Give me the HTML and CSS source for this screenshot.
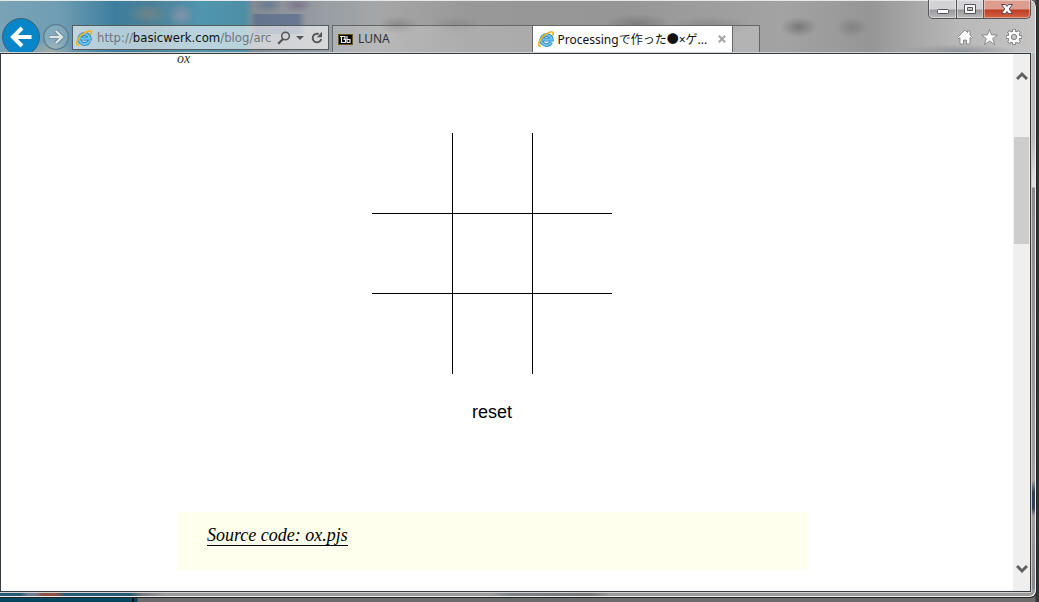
FILE: index.html
```html
<!DOCTYPE html>
<html lang="ja">
<head>
<meta charset="utf-8">
<title>Processingで作った●×ゲーム</title>
<link rel="stylesheet" href="styles.css">
</head>
<body>
<svg class="defs" aria-hidden="true">
  <symbol id="ie" viewBox="0 0 16 16">
    <path d="M13.200 11.200A5.200 5 0 1 1 13.700 8.700H5" fill="none" stroke="#2384bf" stroke-width="3.800"/>
    <path d="M13.200 11.200A5.200 5 0 1 1 13.700 8.700H5" fill="none" stroke="#6cc3ee" stroke-width="2.200"/>
    <path d="M3 15.200C-.8 15.800.2 10 5 5.400 9.400 1.200 14.800-.4 15.200 2.200c.1.800-.2 1.700-.6 2.500" fill="none" stroke="#f3b51b" stroke-width="1.700"/>
  </symbol>
</svg>
<div class="window">
  <header class="chrome">
    <div class="caption">
      <button class="cap" aria-label="Minimize"><svg width="14" height="12" viewBox="0 0 14 12"><rect x="1.500" y="6.500" width="11" height="4" rx="1" fill="#fff" stroke="#50505f"/></svg></button>
      <button class="cap" aria-label="Maximize"><svg width="14" height="12" viewBox="0 0 14 12"><path d="M1.500 1.500h11v9h-11zM4.500 4.500v3h5v-3z" fill="#fff" fill-rule="evenodd" stroke="#50505f"/></svg></button>
      <button class="cap close" aria-label="Close"><svg width="14" height="12" viewBox="0 0 14 12"><path d="M1.500 1.500h4L7 3.500l1.500-2h4L9.200 6l3.300 4.500h-4L7 8.500l-1.500 2h-4L4.800 6z" fill="#fff" stroke="#5a4858"/></svg></button>
    </div>
    <div class="toolbar">
      <button class="back" aria-label="Back"><svg width="38" height="38" viewBox="0 0 38 38"><circle cx="19" cy="19" r="18.500" fill="#0686c9" stroke="#41606e"/><path d="M29.500 19H12M20 10l-9 9 9 9" fill="none" stroke="#fff" stroke-width="4"/></svg></button>
      <button class="forward" aria-label="Forward"><svg width="26" height="26" viewBox="0 0 26 26"><circle cx="13" cy="13" r="12.300" fill="#ffffff22" stroke="#5b7e8d" stroke-width="1.300"/><path d="M6 13h12M13 7l6 6-6 6" fill="none" stroke="#66818d" stroke-width="4"/><path d="M6.500 13h12M13 7l6 6-6 6" fill="none" stroke="#dce6ea" stroke-width="2.400"/></svg></button>
      <div class="address">
        <svg class="ie" aria-hidden="true"><use href="#ie"/></svg>
        <a class="url" href="#">http://<b>basicwerk.com</b>/blog/arc</a>
        <button aria-label="Search"><svg width="14" height="14" viewBox="0 0 14 14"><circle cx="8.500" cy="5" r="3.800" fill="none" stroke="#555" stroke-width="1.500"/><path d="M6 8l-4.800 4.800" stroke="#555" stroke-width="2.200"/></svg></button>
        <button aria-label="Address list"><svg width="8" height="14" viewBox="0 0 8 14"><path d="M0 5h8L4 9z" fill="#555"/></svg></button>
        <button class="reload" aria-label="Refresh"><svg width="12" height="14" viewBox="0 0 12 14"><path d="M7.500 3A4.300 4.300 0 1 0 10.200 8" fill="none" stroke="#555" stroke-width="1.900"/><path d="M11 .8v5.400H5.800z" fill="#555"/></svg></button>
      </div>
      <nav class="tabs">
        <a class="tab" href="#"><svg width="15" height="11" viewBox="0 0 15 11"><rect x=".5" y=".5" width="14" height="10" fill="#000" stroke="#70531c"/><path d="M2 2.500h3M3.500 2v7M5 2.500h2v2.500H5.500M5.500 5.500H7.500v3H4M9 2v6.500M9 5.500h3v3H9" fill="none" stroke="#eee" stroke-width="1.200"/></svg><span>LUNA</span></a>
        <div class="tab active"><svg class="ie" aria-hidden="true"><use href="#ie"/></svg><a href="#">Processingで作った<span class="dot">●</span>×ゲ...</a><button aria-label="Close tab"><svg width="8" height="8" viewBox="0 0 8 8"><path d="M.8.8l6.400 6.400M7.200.8L.8 7.200" stroke="#a3a3a3" stroke-width="2"/></svg></button></div>
        <button class="newtab" aria-label="New tab"></button>
      </nav>
      <div class="tools">
        <button aria-label="Home"><svg width="16" height="16" viewBox="0 0 16 16"><path d="M8 1l2.500 2.500V2H13v4l2.500 2.500-1 1L13 8.500V15H9.500v-4h-3v4H3V8.500L1.500 9.500l-1-1z" fill="#fff" stroke="#777" stroke-width=".8"/></svg></button>
        <button aria-label="Favorites"><svg width="17" height="16" viewBox="0 0 17 16"><path d="M8.500.5l2 5.400 6 .1-4.800 3.600 1.900 6-5.100-3.600-5.100 3.600 1.900-6L.5 6l6-.1z" fill="#fff" stroke="#777" stroke-width=".8"/></svg></button>
        <button aria-label="Tools"><svg width="16" height="16" viewBox="0 0 16 16"><g fill="none"><path d="M8 0v16M0 8h16M2.300 2.300l11.400 11.400M13.700 2.300L2.300 13.700" stroke="#777" stroke-width="3.400"/><circle cx="8" cy="8" r="4.300" stroke="#777" stroke-width="4"/><path d="M8 .7v14.600M.7 8h14.600M2.800 2.800l10.400 10.400M13.200 2.800L2.800 13.200" stroke="#fff" stroke-width="2"/></g><circle cx="8" cy="8" r="4.200" fill="#bbb" stroke="#fff" stroke-width="2.600"/><circle cx="8" cy="8" r="2.700" fill="#c4c4c4" stroke="#777" stroke-width=".8"/></svg></button>
      </div>
    </div>
  </header>
  <div class="viewport">
    <main class="page">
      <p class="caption-text">ox</p>
      <section class="game">
        <svg class="board" width="240" height="241" viewBox="0 0 240 241" role="img" aria-label="Game board"><path d="M80.500 0v241M160.500 0v241M0 80.500h240M0 160.500h240" stroke="#000"/></svg>
        <button class="reset">reset</button>
      </section>
      <div class="source"><a href="#">Source code: ox.pjs</a></div>
    </main>
    <div class="scrollbar">
      <button aria-label="Scroll up"><svg width="12" height="10" viewBox="0 0 12 10"><path d="M1 8l5-5 5 5" fill="none" stroke="#606060" stroke-width="3"/></svg></button>
      <div class="track"><div class="thumb"></div></div>
      <button aria-label="Scroll down"><svg width="12" height="10" viewBox="0 0 12 10"><path d="M1 2l5 5 5-5" fill="none" stroke="#606060" stroke-width="3"/></svg></button>
    </div>
  </div>
</div>
</body>
</html>
```
FILE: styles.css
```css
* { box-sizing: border-box; }
body {
  margin: 0;
  height: 100vh;
  padding: 0 2px 4px 0;
  overflow: hidden;
  display: flex;
  background: linear-gradient(90deg, #06465f 0 132px, #111 132px 134px, #06465f 134px 137px, #6c6b6c 138px calc(100% - 4px), #34373a calc(100% - 3px));
}
button { border: 0; padding: 0; margin: 0; background: none; display: flex; align-items: center; justify-content: center; }
a { color: inherit; text-decoration: none; }
svg { display: block; flex: none; }
.defs { position: absolute; width: 0; height: 0; }
.ie { width: 16px; height: 16px; }

.window {
  flex: 1;
  min-width: 0;
  display: flex;
  flex-direction: column;
  padding: 0 5px 5px 0;
  border: solid #1f2326;
  border-width: 0 1px 1px 0;
  border-radius: 0 7px 7px 0;
  box-shadow: inset -1px -1px #eee;
  background:
    linear-gradient(90deg, #235a75 0 20px, #6e7a91 28px 36px, #8f5140 42px 55px, #235a75 66px 130px, #7a7a7d 142px, #9b999a 165px 490px, #7d8187 510px, #777 590px, #9b999a 610px) bottom / 100% 8px no-repeat,
    linear-gradient(#bbb 0 140px, #ddd 180px 187px, #8c8c8c 188px, #a2a2a2 480px, #33415a 492px 508px, #a09da0 516px, #85858c) right / 6px 100% no-repeat,
    #999;
}
.chrome {
  flex: none;
  height: 53px;
  overflow: hidden;
  margin-right: -4px;
  padding-right: 4px;
  border-bottom: 1px solid #d0d3d3;
  border-radius: 0 6px 0 0;
  box-shadow: inset 0 1px #e3eae9;
  background:
    radial-gradient(24px 12px at 50px 52px, #c2b69a99, transparent),
    radial-gradient(20px 10px at 148px 14px, #8e8a7a88, transparent),
    radial-gradient(14px 12px at 181px 15px, #b497ae88, transparent),
    linear-gradient(90deg, transparent, #465f8b88 6px 48px, transparent) 250px 14px / 56px 20px no-repeat,
    radial-gradient(14px 8px at 268px 5px, #46618a77, transparent),
    radial-gradient(14px 8px at 298px 5px, #6a4f7a77, transparent),
    radial-gradient(20px 9px at 398px 25px, #55555555, transparent),
    radial-gradient(24px 9px at 455px 25px, #66666644, transparent),
    radial-gradient(34px 10px at 638px 24px, #55555566, transparent),
    radial-gradient(40px 10px at 710px 26px, #66666655, transparent),
    radial-gradient(18px 10px at 799px 27px, #55555588, transparent),
    radial-gradient(16px 10px at 852px 27px, #66666677, transparent),
    radial-gradient(60px 8px at 960px 52px, #70788299, transparent),
    linear-gradient(90deg, #79a3b7 0, #6f9db3 60px, #3d7e9e 115px, #4c8097 150px, #5095ae 200px, #4e8fa6 245px, #858b93 254px, #999fa4 330px, #a6a6a6 380px, #989898 470px, #969696 620px, #a3a3a3 780px, #969696 870px, #b9b9b9 960px, #c4c4c4);
}
.caption { height: 18px; display: flex; justify-content: flex-end; }
.cap {
  width: 28px;
  height: 19px;
  margin-left: -1px;
  border: 1px solid #55555c;
  border-top: 0;
  box-shadow: inset 0 0 0 1px #fff6;
  background: linear-gradient(#d3d3d5 0 9px, #97979a 10px, #bbb);
}
.cap:first-child { width: 29px; border-radius: 0 0 0 5px; }
.cap.close { width: 48px; border-radius: 0 0 5px 0; background: linear-gradient(#dc9c8e 0 9px, #bd3d22 10px, #d46444); }

.toolbar { display: flex; align-items: flex-start; height: 34px; font-family: "Noto Sans", "Noto Sans CJK JP", sans-serif; }
.back { margin-left: 2px; flex: none; }
.forward { margin: 6px 3px 0; flex: none; }
.address {
  flex: 0 1 257px;
  min-width: 0;
  height: 25px;
  margin-top: 7px;
  padding: 0 5px 0 3px;
  display: flex;
  align-items: center;
  gap: 5px;
  border: 1px solid #555c60;
  background: #ffffff99;
}
.url { flex: 1; min-width: 0; overflow: hidden; white-space: nowrap; font: 13px/20px "DejaVu Sans Condensed", "DejaVu Sans", sans-serif; color: #707579; }
.url b { font-weight: 400; color: #111; }
.reload { margin-left: 2px; }
.tabs { flex: 0 1 428px; min-width: 0; margin: 7px 0 0 3px; display: flex; height: 27px; }
.tab {
  flex: 1 1 200px;
  min-width: 0;
  display: flex;
  align-items: center;
  gap: 5px;
  padding: 0 5px;
  border: 1px solid #666;
  border-bottom: 0;
  background: #ffffff33;
  font-size: 12px;
  line-height: 20px;
  color: #333;
  white-space: nowrap;
}
.tab + .tab { border-left: 0; }
.tab a { flex: 1; min-width: 0; overflow: hidden; }
.dot { font-family: "Noto Sans CJK JP", sans-serif; }
.tab.active { padding-right: 6px; gap: 4px; background: #fff; color: #111; }
.newtab { width: 27px; flex: none; border: 1px solid #666; border-width: 1px 1px 0 0; background: #ffffff33; }
.tools { margin: 11px 9px 0 auto; display: flex; gap: 8px; }

.viewport { flex: 1; min-height: 0; display: flex; border: 1px solid #333b40; box-shadow: 0 1px #d4d4d4, 1px 0 #ccc; background: #fff; }
.page { flex: 1; min-width: 0; padding: 0 206px 0 176px; font-family: Georgia, "Liberation Serif", serif; }
.caption-text { margin: 0; height: 19px; line-height: 10px; font-size: 14px; font-style: italic; color: #333; }
.game { display: flex; flex-direction: column; align-items: center; padding: 60px 0 88px; }
.reset { margin-top: 26px; font: 18px/24px "Liberation Sans", Arial, sans-serif; color: #000; }
.source { height: 58px; padding: 13px 30px; background: #ffffee; font-size: 18px; line-height: 20px; font-style: italic; color: #000; }
.source a { display: inline-block; border-bottom: 1px solid #000; }
.scrollbar { flex: none; width: 17px; display: flex; flex-direction: column; background: #efefef; padding: 12px 0; }
.scrollbar button { height: 20px; }
.track { flex: 1; padding: 51px 1px 0; }
.thumb { height: 107px; background: #cdcdcd; }
```
